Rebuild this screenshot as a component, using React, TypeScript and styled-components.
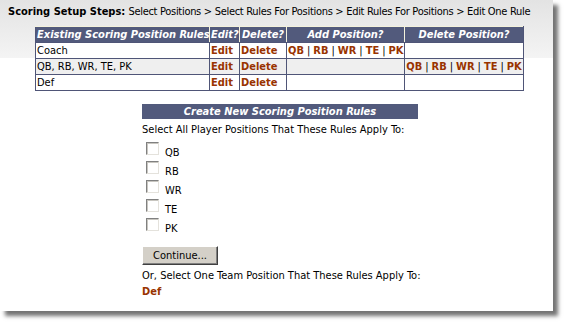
import React from 'react';
import styled, { createGlobalStyle } from 'styled-components';

const GlobalStyle = createGlobalStyle`
  html, body {
    margin: 0;
    padding: 0;
    background: #ffffff;
  }
  body {
    font-family: "DejaVu Sans Condensed", "Liberation Sans", sans-serif;
    font-size: 11px;
    color: #000;
  }
`;

const positions = ['QB', 'RB', 'WR', 'TE', 'PK'];

const rules = [
  { name: 'Coach', add: true, remove: false },
  { name: 'QB, RB, WR, TE, PK', add: false, remove: true },
  { name: 'Def', add: false, remove: false },
];

const columnWidths = [174, 30, 47, 118, 119];

const PositionLinks: React.FC = () => (
  <>
    {positions.map((p, i) => (
      <React.Fragment key={p}>
        {i > 0 && <Sep>|</Sep>}
        <Link href="#">{p}</Link>
      </React.Fragment>
    ))}
  </>
);

const App: React.FC = () => {
  return (
    <>
      <GlobalStyle />
      <Screen>
        <Page>
          <Steps>
            <b>Scoring Setup Steps:</b>{' '}
            <StepTrail>
              Select Positions &gt; Select Rules For Positions &gt; Edit Rules For Positions &gt; Edit One Rule
            </StepTrail>
          </Steps>

          <RulesTable>
            <colgroup>
              {columnWidths.map((w, i) => (
                <col key={i} style={{ width: w }} />
              ))}
            </colgroup>
            <thead>
              <tr>
                <Th>Existing Scoring Position Rules</Th>
                <Th>Edit?</Th>
                <Th>Delete?</Th>
                <Th>Add Position?</Th>
                <Th>Delete Position?</Th>
              </tr>
            </thead>
            <tbody>
              {rules.map((r, i) => (
                <Row key={r.name} $alt={i % 2 === 1}>
                  <Td>{r.name}</Td>
                  <Td><Link href="#">Edit</Link></Td>
                  <Td><Link href="#">Delete</Link></Td>
                  <Td $center>{r.add && <PositionLinks />}</Td>
                  <Td $center>{r.remove && <PositionLinks />}</Td>
                </Row>
              ))}
            </tbody>
          </RulesTable>

          <CreateBox>
            <SectionBar>Create New Scoring Position Rules</SectionBar>
            <Prompt>Select All Player Positions That These Rules Apply To:</Prompt>
            <CheckList>
              {positions.map((p) => (
                <CheckRow key={p}>
                  <Check type="checkbox" />
                  <CheckLabel>{p}</CheckLabel>
                </CheckRow>
              ))}
            </CheckList>
            <Button type="button">Continue...</Button>
            <Prompt>Or, Select One Team Position That These Rules Apply To:</Prompt>
            <TeamLink href="#">Def</TeamLink>
          </CreateBox>
        </Page>
      </Screen>
    </>
  );
};

const Screen = styled.div`
  width: 564px;
  height: 323px;
  overflow: hidden;
  background: #ffffff;
`;

const Page = styled.div`
  width: 548px;
  height: 311px;
  padding-left: 5px;
  box-sizing: content-box;
  background: linear-gradient(#e3e3e3, #f4f4f4) 0 0 / 100% 58px no-repeat, #ffffff;
  box-shadow: 5px 5px 4px rgba(0, 0, 0, 0.55);
  overflow: hidden;
`;

const Steps = styled.div`
  padding: 5px 0 0 3px;
  height: 27px;
  box-sizing: border-box;
  line-height: 14px;
  font-size: 11px;
  white-space: nowrap;

  b {
    font-weight: bold;
  }
`;

const StepTrail = styled.span`
  letter-spacing: -0.3px;
`;

const RulesTable = styled.table`
  margin: -1px 0 0 30px;
  width: 488px;
  table-layout: fixed;
  border-collapse: collapse;
  border: 1px solid #4f5577;
  background: #fff;
`;

const Th = styled.th`
  background: #525a7c;
  color: #fff;
  font-style: italic;
  font-weight: bold;
  font-size: 11px;
  height: 15px;
  padding: 0 1px;
  line-height: 15px;
  text-align: center;
  white-space: nowrap;
  overflow: hidden;
  border: 1px solid #f4f2dc;
  border-bottom-color: #4f5577;

  &:first-child {
    border-left-color: #4f5577;
    text-align: left;
  }
  &:last-child {
    border-right-color: #4f5577;
  }
`;

const Row = styled.tr<{ $alt?: boolean }>`
  background: ${(p) => (p.$alt ? '#efefef' : '#ffffff')};
`;

const Td = styled.td<{ $center?: boolean }>`
  border: 1px solid #4f5577;
  height: 15px;
  padding: 0 1px;
  line-height: 14px;
  white-space: nowrap;
  overflow: hidden;
  text-align: ${(p) => (p.$center ? 'center' : 'left')};
`;

const Link = styled.a`
  color: #993300;
  font-weight: bold;
  text-decoration: none;
`;

const Sep = styled.span`
  color: #000;
  margin: 0 3px;
`;

const CreateBox = styled.div`
  width: 276px;
  margin: 13px 0 0 137px;
`;

const SectionBar = styled.div`
  background: #525a7c;
  color: #fff;
  font-style: italic;
  font-weight: bold;
  text-align: center;
  height: 15px;
  line-height: 15px;
`;

const Prompt = styled.div`
  line-height: 14px;
  margin-top: 4px;
  white-space: nowrap;
`;

const CheckList = styled.div`
  display: flex;
  flex-direction: column;
  gap: 6px;
  margin: 5px 0 0 4px;
`;

const CheckRow = styled.label`
  display: flex;
  align-items: flex-start;
  gap: 6px;
  height: 13px;
`;

const Check = styled.input`
  appearance: none;
  margin: 0;
  width: 13px;
  height: 13px;
  background: #fff;
  border: 1px solid;
  border-color: #808080 #e4e2dc #e4e2dc #808080;
  box-shadow: inset 1px 1px 0 #c8c6c0;
`;

const CheckLabel = styled.span`
  line-height: 14px;
  padding-top: 4px;
`;

const Button = styled.button`
  display: block;
  margin-top: 15px;
  width: 76px;
  height: 19px;
  padding: 0;
  font-family: inherit;
  font-size: 11px;
  color: #000;
  background: #d4d0c8;
  border: 1px solid;
  border-color: #ffffff #404040 #404040 #ffffff;
  box-shadow: inset -1px -1px 0 #808080;
`;

const TeamLink = styled(Link)`
  display: block;
  margin-top: 2px;
  font-size: 11px;
`;

export default App;
